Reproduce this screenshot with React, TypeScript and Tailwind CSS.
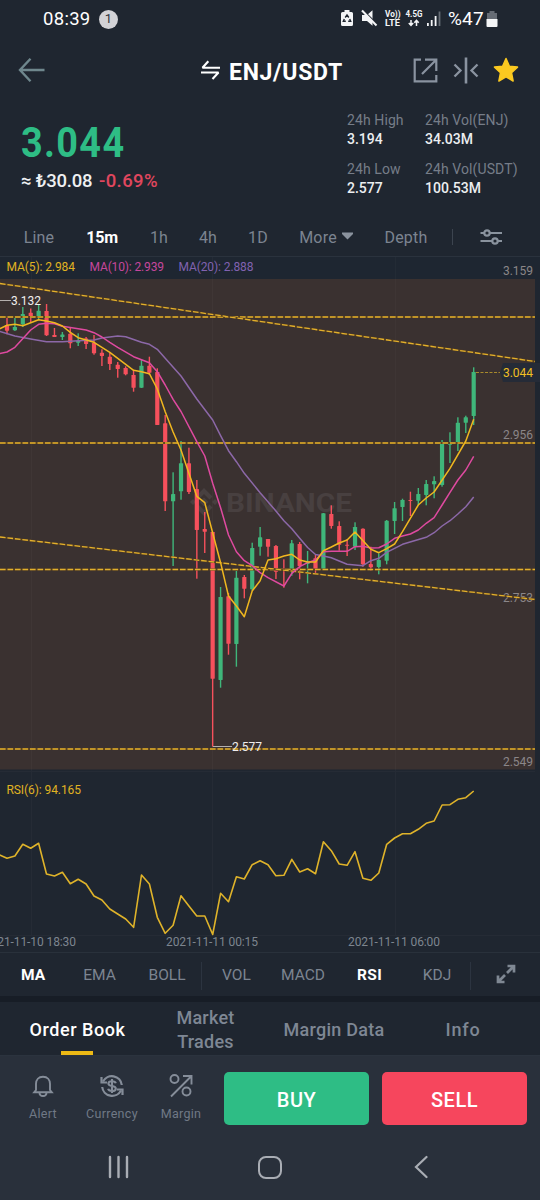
import type { ReactNode } from "react";

type Candle = [up: 0 | 1, high: number, top: number, bottom: number, low: number];
type Point = [number, number];

const GREEN = "#3fb67a";
const RED = "#f6505c";
const GOLD = "#e0b322";
const STEP = 7.91;

const candleX = (i: number) => 7 + i * STEP;

const candles: Candle[] = [
  [0, 317.7, 325.3, 330.7, 334.3],
  [1, 317.7, 327, 330.3, 331],
  [1, 307, 314, 324.3, 327],
  [0, 308.5, 312.7, 317.7, 322.7],
  [1, 304.3, 310.7, 316.3, 320],
  [0, 304, 311, 335.3, 336],
  [0, 328, 335, 337, 337],
  [1, 332, 334.5, 337, 340],
  [0, 328, 333.7, 343.3, 348.3],
  [1, 333.3, 340.7, 342.7, 346],
  [0, 337, 338.5, 344, 349],
  [0, 335, 342.7, 353.3, 354.7],
  [0, 349.3, 352.7, 356, 366],
  [0, 352.7, 356.7, 364, 370],
  [0, 362, 364.7, 369, 377.7],
  [0, 366.3, 368, 374.3, 375.3],
  [0, 370, 375, 387.7, 391.7],
  [1, 359.3, 365.7, 387.7, 388],
  [0, 356.7, 365.7, 372.7, 375],
  [0, 368.3, 372, 425, 425],
  [0, 415, 423.3, 501.3, 511],
  [1, 472.3, 494, 501.3, 566],
  [1, 441, 463.3, 491.3, 499.7],
  [0, 447.7, 463.3, 492, 494],
  [0, 480, 489, 530, 578.7],
  [0, 512, 529, 531.7, 553],
  [0, 531.7, 532, 678.7, 746.7],
  [1, 587, 597, 680, 687.7],
  [0, 593, 596.3, 643.7, 654.7],
  [1, 571, 577.7, 644, 666.7],
  [0, 575, 577, 588.7, 598.3],
  [1, 542.7, 548, 589.3, 590.7],
  [1, 527, 537.3, 546.7, 555.7],
  [0, 539, 539, 546.7, 556.7],
  [0, 545, 546, 571.7, 579],
  [0, 559.3, 569.3, 570.3, 587.7],
  [1, 540, 543.3, 570.7, 575.7],
  [0, 542, 544, 566, 579.3],
  [1, 551, 562.3, 564, 583.3],
  [0, 555, 558.3, 570, 573.3],
  [1, 513, 513.3, 569.3, 570],
  [0, 505.3, 514, 526, 528.7],
  [0, 521.3, 526, 544.7, 550.7],
  [0, 539, 544.7, 545.7, 556],
  [1, 522.3, 527, 546.7, 550],
  [0, 528.3, 528.7, 564.3, 566.7],
  [0, 546.7, 564, 567.3, 570.7],
  [1, 553.3, 560, 567, 574.3],
  [1, 520, 520.7, 560.7, 564.3],
  [1, 502, 508.3, 521, 534],
  [1, 498.7, 500, 507, 521],
  [0, 491.7, 500, 501, 516],
  [1, 488, 494, 500.7, 505],
  [1, 480, 484, 495, 505.3],
  [1, 476.3, 481, 484.3, 498.3],
  [1, 440, 443.7, 485, 486.7],
  [1, 432.3, 443.3, 444.7, 463],
  [1, 417.3, 422.7, 442.7, 451],
  [1, 415.7, 417.3, 422.7, 433],
  [1, 367.3, 372, 416, 425],
];

// Indicator lines as [candle index, y]
const ma5: Point[] = [
  [-1, 329], [0, 325.3], [1, 324.3], [2, 325.7], [4, 319.7], [5, 321], [6, 322.7], [7, 326], [8, 332.3],
  [9, 337.7], [11, 342.3], [13, 352.3], [15, 364.3], [16, 370.3], [17, 371.7], [18, 373.7], [19, 389],
  [20, 411.7], [21, 432], [22, 450], [23, 473.3], [24, 496.3], [25, 502.7], [26, 533], [27, 562.7],
  [28, 596], [29, 606], [30, 616.7], [31, 591], [32, 580.7], [33, 560], [34, 558.7], [35, 556],
  [36, 554.3], [37, 560], [38, 562], [39, 562], [40, 550.7], [41, 547], [42, 543], [43, 540],
  [44, 532], [46, 549.3], [47, 552.7], [48, 548.7], [49, 544], [50, 531.7], [52, 505], [53, 498],
  [54, 492], [56, 468.3], [58, 441], [59, 419.3],
];
const ma10: Point[] = [
  [-1, 353.7], [0, 352], [1, 347.3], [3, 330], [4, 324.3], [5, 323.3], [6, 323.7], [7, 326.3],
  [10, 330], [11, 332.7], [12, 337], [13, 342.3], [14, 347.3], [16, 356.7], [17, 359.7], [18, 362.7],
  [19, 371.7], [20, 385], [21, 399.3], [22, 411.5], [24, 441.7], [25, 456], [26, 483.3], [27, 507.7],
  [28, 535], [29, 551.7], [30, 560.7], [31, 565.7], [32, 572.7], [33, 577.7], [35, 586], [36, 573.3],
  [37, 566.7], [38, 562.7], [39, 560], [40, 551.7], [41, 551.3], [43, 551.3], [44, 546.7],
  [45, 546.3], [46, 548], [47, 547.7], [48, 544], [49, 538.3], [50, 536], [51, 534], [52, 530],
  [53, 523.3], [54, 517.7], [55, 505], [56, 492.3], [57, 480], [58, 470], [59, 456.3],
];
const ma20: Point[] = [
  [-1, 331.3], [1, 336], [3, 339], [5, 341.7], [7, 341.7], [9, 340.7], [11, 340], [12, 338],
  [14, 336], [15, 336.7], [17, 342.3], [18, 344.3], [19, 349.3], [20, 358.3], [22, 376], [24, 399],
  [26, 420], [27, 435.7], [28, 450.7], [29, 461.7], [30, 473.3], [32, 492.7], [34, 511],
  [35, 520.7], [36, 528.7], [37, 538.3], [38, 547.5], [39, 554.5], [40, 556], [41, 557.7],
  [43, 564.3], [45, 565.7], [46, 560.7], [47, 558.3], [48, 552.3], [50, 544.3], [53, 537.3],
  [54, 532.7], [55, 526], [56, 520.7], [57, 514], [58, 506.7], [59, 497],
];
const rsi = [
  854.7, 858.3, 856, 844.3, 848.3, 843.3, 874, 876, 872.3, 883.7, 879.3, 884, 896, 900, 909, 914,
  919, 927.3, 875, 884, 917.3, 933.3, 925.3, 895.7, 906, 916, 916, 934.5, 893.3, 901.7, 876.7, 879,
  864.7, 860.7, 864.7, 875.7, 875.3, 859.3, 872, 868.7, 873.7, 841.7, 850.7, 864, 865.3, 851.7,
  878.3, 880.3, 873, 844.3, 838, 833.7, 833.7, 829.3, 823.3, 821, 805, 804.7, 799.3, 797.7, 791,
];

const toPoints = (points: Point[]) =>
  points.map(([i, y]) => `${candleX(i).toFixed(1)},${y}`).join(" ");

const trendLines = [
  [0, 317, 535, 317],
  [0, 443, 535, 443],
  [0, 569.5, 535, 569.5],
  [0, 749, 535, 749],
  [0, 283.5, 535, 361.5],
  [0, 537, 535, 599.5],
];

function Chart() {
  return (
    <svg
      viewBox="0 256 540 696"
      width="540"
      height="696"
      className="block"
      fontFamily="Roboto, sans-serif"
      fontSize="12"
    >
      <rect x="0" y="256" width="540" height="1" fill="#2a323d" />
      <rect x="0" y="257" width="540" height="22" fill="#1e2631" />
      <rect x="0" y="279" width="535" height="490.5" fill="#3a3130" />
      <g fill="#ffffff" opacity="0.025">
        <rect x="31" y="257" width="1" height="678" />
        <rect x="212" y="257" width="1" height="678" />
        <rect x="395" y="257" width="1" height="678" />
        <rect x="0" y="771" width="535" height="1" />
        <rect x="0" y="935" width="540" height="1" />
      </g>

      {/* Watermark */}
      <g fill="#484040">
        <g transform="translate(204 502)">
          <path d="M0 -4.5 4.5 0 0 4.5 -4.5 0Z" />
          <path d="M-11 -3 -8 0 -11 3 -14 0Z" />
          <path d="M11 -3 14 0 11 3 8 0Z" />
          <path d="M0 -14 8.5 -5.5 5.5 -2.5 0 -8 -5.5 -2.5 -8.5 -5.5Z" />
          <path d="M0 14 8.5 5.5 5.5 2.5 0 8 -5.5 2.5 -8.5 5.5Z" />
        </g>
        <text x="226" y="511.5" fontSize="25" fontWeight="700" textLength="126" lengthAdjust="spacingAndGlyphs">
          BINANCE
        </text>
      </g>

      <g fill="#8b8688">
        <text x="503" y="275" textLength="30">3.159</text>
        <text x="503" y="439" textLength="30">2.956</text>
        <text x="503" y="602" textLength="30">2.753</text>
        <text x="503" y="766" textLength="30">2.549</text>
      </g>

      {candles.map(([up, high, top, bottom, low], i) => {
        const x = candleX(i);
        return (
          <g key={i} fill={up ? GREEN : RED}>
            <rect x={x - 0.7} y={high} width="1.4" height={low - high} />
            <rect x={x - 2.1} y={top} width="4.2" height={bottom - top} rx="0.4" />
          </g>
        );
      })}

      {trendLines.map(([x1, y1, x2, y2]) => (
        <g key={y1}>
          <line x1={x1} y1={y1} x2={x2} y2={y2} stroke="#59411f" strokeWidth="2" />
          <line
            x1={x1}
            y1={y1}
            x2={x2}
            y2={y2}
            stroke="#e2b02d"
            strokeWidth="1.3"
            strokeDasharray="5.6 1.9"
          />
        </g>
      ))}

      <g fill="none" strokeWidth="1.5" strokeLinejoin="round">
        <polyline points={toPoints(ma20)} stroke="#8c68a8" />
        <polyline points={toPoints(ma10)} stroke="#df4aa0" />
        <polyline points={toPoints(ma5)} stroke="#f0b71f" />
        <polyline
          points={rsi.map((y, i) => `${candleX(i - 1).toFixed(1)},${y}`).join(" ")}
          stroke="#dfb32a"
          strokeWidth="1.6"
        />
      </g>

      {/* High and low markers */}
      <path d="M0 300.5H11M213 746.5H232" stroke="#b5b0ae" strokeWidth="1" />
      <g fill="#f0eeee">
        <text x="11" y="305" textLength="30">3.132</text>
        <text x="232" y="751" textLength="30">2.577</text>
      </g>

      <path d="M476 372.5H500" stroke="#a88a2c" strokeWidth="1" strokeDasharray="3 1.5" />
      <path d="M500 372.5 503 363H540V382H503Z" fill="#252b37" />
      <text x="503" y="377" fill="#f0bf22" textLength="30">3.044</text>

      <text x="6.5" y="271" fill={GOLD} textLength="68.5">MA(5): 2.984</text>
      <text x="89.5" y="271" fill="#c6469c" textLength="74.5">MA(10): 2.939</text>
      <text x="178.5" y="271" fill="#8162b0" textLength="75">MA(20): 2.888</text>
      <text x="6.5" y="794" fill={GOLD} textLength="74.5">RSI(6): 94.165</text>

      <g fill="#7d858f">
        <text x="-16" y="945.5" textLength="92">2021-11-10 18:30</text>
        <text x="166" y="945.5" textLength="92">2021-11-11 00:15</text>
        <text x="348" y="945.5" textLength="92">2021-11-11 06:00</text>
      </g>
    </svg>
  );
}

function StatusBar() {
  return (
    <div className="flex h-[38px] items-center pl-[43px] pt-[1px] text-white">
      <span className="w-[48px] text-[18.5px] tracking-[0.3px]">08:39</span>
      <span className="-mt-[1px] ml-[8px] flex h-[19px] w-[19px] items-center justify-center rounded-full bg-[#d2d2d6] text-[13px] text-[#30343c]">
        1
      </span>
      <svg className="-mt-[1px] ml-[223px]" width="106" height="22" viewBox="341 8 106 22" fill="#f4f5f7">
        <path d="M344.5 10h5v2h2q1.5 0 1.5 1.5v11q0 1.5-1.5 1.5h-9q-1.5 0-1.5-1.5v-11q0-1.5 1.5-1.5h2z" />
        <path
          d="M345.2 17.500 347 15l1.800 2.500M349.700 19l1 2.300h-2.500M345.800 21.300h-2.500l1-2.300"
          fill="none"
          stroke="#1f2630"
          strokeWidth="1.4"
        />
        <path d="M362 15h5l5.500-4.800v15.600L367 21h-5z" />
        <path d="M361 8.500 377 24.500" stroke="#1f2630" strokeWidth="2" />
        <path d="M362 10.500 376.500 25.500" stroke="#f4f5f7" strokeWidth="2" />
        <g fontFamily="Roboto, sans-serif" fontWeight="700">
          <text x="385" y="17.300" fontSize="9" textLength="15.500" lengthAdjust="spacingAndGlyphs">Vo))</text>
          <text x="385" y="26.300" fontSize="9.500" textLength="15" lengthAdjust="spacingAndGlyphs">LTE</text>
          <text x="405.500" y="17.300" fontSize="9" textLength="17" lengthAdjust="spacingAndGlyphs">4.5G</text>
        </g>
        <path
          d="M411 20v5M408.800 23l2.200 2.400 2.200-2.400M416.500 26v-5M414.300 22.800l2.200-2.400 2.200 2.400"
          fill="none"
          stroke="#f4f5f7"
          strokeWidth="1.500"
        />
        <path d="M427 23h1.800v3H427zM430.800 20h1.800v6h-1.800zM434.700 16h1.800v10h-1.800z" />
        <path d="M438.600 11.500h1.800V26h-1.800z" fill="#666c75" />
      </svg>
      <span className="ml-[1px] w-[38px] text-[19px] tracking-[0.2px]">%47</span>
      <svg className="-mt-[2px]" width="12" height="18" viewBox="0 0 12 18">
        <path d="M3.500 1h5v2H11v7H1V3h2.500z" fill="#666c75" />
        <path d="M0.500 9h11v7q0 1-1 1h-9q-1 0-1-1z" fill="#f4f5f7" />
      </svg>
    </div>
  );
}

function Header() {
  return (
    <header className="flex h-[64px] items-center pl-[18px]">
      <svg width="27" height="26" viewBox="0 0 27 26" fill="none" stroke="#6f878d" strokeWidth="2.4">
        <path d="M26.500 13H2M12.500 1.800 2 13l10.500 11.200" />
      </svg>
      <svg className="ml-[155px]" width="21" height="21" viewBox="0 0 21 21" fill="none" stroke="#fff" strokeWidth="2.1">
        <path d="M20 7.700H2.500L8.300 1.200M1 12.500h17.500L12.500 19" strokeLinejoin="bevel" />
      </svg>
      <h1 className="ml-[8px] mt-[5px] w-[115px] whitespace-nowrap text-[23px] font-bold leading-6 tracking-[0.7px] text-white">
        ENJ/USDT
      </h1>
      <svg className="ml-[69px]" width="25" height="25" viewBox="0 0 25 25" fill="none" stroke="#8a93a0" strokeWidth="2.2">
        <path d="M8 1.700H1.700v21.600h21.600V17M12 1.700h11.300V13M23 2 9 16" />
      </svg>
      <svg className="ml-[15px]" width="26" height="27" viewBox="0 0 26 27" fill="none" stroke="#8a93a0" strokeWidth="2.3">
        <path d="M13 0.500v26" strokeWidth="2.600" />
        <path d="M1.500 7.500 7.500 13.500 1.500 19.500M24.500 7.500 18.500 13.500 24.500 19.500" />
      </svg>
      <svg className="ml-[14px]" width="26" height="26" viewBox="0 0 26 26">
        <path
          d="M13 1.500l3.400 7.700 8.100.9-6 5.600 1.600 8.300-7.100-4.200L5.900 24l1.600-8.300-6-5.600 8.100-.9z"
          fill="#fbc920"
          stroke="#fbc920"
          strokeWidth="1.500"
          strokeLinejoin="round"
        />
      </svg>
    </header>
  );
}

function Stat({ label, value }: { label: string; value: string }) {
  return (
    <div className="whitespace-nowrap">
      <div className="h-[20px] text-[14px] leading-[20px] tracking-[0.1px] text-[#767d88]">{label}</div>
      <div className="h-[18px] text-[14px] font-medium leading-[18px] text-[#eceef0]">{value}</div>
    </div>
  );
}

function PriceSummary() {
  return (
    <section className="flex h-[116px]">
      <div className="w-[347px] pl-[21px] pt-[16px]">
        <div className="h-[48px] origin-left scale-x-[0.88] text-[43px] font-bold leading-[48px] tracking-[1.5px] text-[#2ebd85]">
          3.044
        </div>
        <div className="flex h-[30px] whitespace-nowrap text-[18.5px] font-medium leading-[30px]">
          <span className="w-[78px] tracking-[-0.2px] text-[#eef0f2]">≈ ₺30.08</span>
          <span className="tracking-[0.4px] text-[#e0465e]">-0.69%</span>
        </div>
      </div>
      <div className="grid grid-cols-[78px_auto] content-start gap-y-[11px] pt-[8px]">
        <Stat label="24h High" value="3.194" />
        <Stat label="24h Vol(ENJ)" value="34.03M" />
        <Stat label="24h Low" value="2.577" />
        <Stat label="24h Vol(USDT)" value="100.53M" />
      </div>
    </section>
  );
}

function Intervals() {
  return (
    <nav className="flex h-[38px] items-center pt-[2px] text-center text-[16px] tracking-[0.2px] text-[#7c8490]">
      <span className="w-[78px]">Line</span>
      <span className="w-[48px] font-bold tracking-[-0.2px] text-white">15m</span>
      <span className="w-[66px]">1h</span>
      <span className="w-[32px]">4h</span>
      <span className="w-[68px]">1D</span>
      <span className="flex w-[68px] items-center justify-center gap-[5px]">
        More
        <svg width="11" height="8" viewBox="0 0 11 8" className="-mt-1">
          <path d="M0 0.500h11v1.500L5.500 7.500 0 2z" fill="#8a929d" />
        </svg>
      </span>
      <span className="w-[92px]">Depth</span>
      <span className="-mt-[2px] h-[16px] w-px bg-[#3c444f]" />
      <span className="-mt-[3px] flex w-[75px] justify-center">
        <svg width="22" height="18" viewBox="0 0 22 18" fill="#1f2630" stroke="#8a939e" strokeWidth="2.2">
          <path d="M0.500 5H22M0.500 13H22" />
          <circle cx="7" cy="5" r="2.700" />
          <circle cx="15" cy="13" r="2.700" />
        </svg>
      </span>
    </nav>
  );
}

function Indicators() {
  return (
    <nav className="flex h-[44px] items-center border-t border-[#29313b] pt-[2px] text-center text-[15.5px] text-[#7c8490]">
      <span className="w-[66px] font-bold text-white">MA</span>
      <span className="w-[67px]">EMA</span>
      <span className="w-[68px]">BOLL</span>
      <span className="h-[28px] w-px bg-[#2c3440]" />
      <span className="w-[69px]">VOL</span>
      <span className="w-[64px]">MACD</span>
      <span className="w-[69px] font-bold tracking-[0.4px] text-white">RSI</span>
      <span className="w-[66px]">KDJ</span>
      <span className="h-[28px] w-px bg-[#2c3440]" />
      <span className="-mt-[3px] flex w-[69px] justify-center">
        <svg width="20" height="20" viewBox="0 0 20 20" fill="none" stroke="#7f8893" strokeWidth="2.7">
          <path d="M11.500 2H18v6.500M17.500 2.500 11 9M8.500 18H2v-6.500M2.500 17.500 9 11" />
        </svg>
      </span>
    </nav>
  );
}

function SectionTabs() {
  return (
    <nav className="relative flex h-[54px] items-center border-b border-[#2b333e] pt-[3px] text-center text-[18px] leading-[24px] tracking-[0.25px] text-[#7e8794]">
      <span className="w-[155px] font-medium tracking-[0.55px] text-white">Order Book</span>
      <span className="w-[101px] px-[16px] font-medium">Market Trades</span>
      <span className="w-[156px] font-medium">Margin Data</span>
      <span className="w-[102px] font-medium tracking-[0.8px]">Info</span>
      <span className="absolute bottom-0 left-[61px] h-[4px] w-[32px] bg-[#edb915]" />
    </nav>
  );
}

function Action({ label, className, children }: { label: string; className: string; children: ReactNode }) {
  return (
    <div className={`flex flex-col items-center pt-[1px] ${className}`}>
      <svg width="26" height="26" viewBox="0 0 26 26" fill="none" stroke="#858d99" strokeWidth="1.9">
        {children}
      </svg>
      <span className="mt-[6px] text-[12.5px] leading-[18px] tracking-[0.3px] text-[#707986]">{label}</span>
    </div>
  );
}

function BottomBar() {
  return (
    <div className="flex h-[78px] pt-[15.5px]">
      <Action label="Alert" className="w-[86px]">
        <path d="M13 3.800c-4.500 0-7 3-7 7V17l-1.800 2.200h17.600L20 17v-6.200c0-4-2.500-7-7-7z" />
        <path d="M9.500 19.500q0 3.500 3.500 3.500t3.500-3.500" />
      </Action>
      <Action label="Currency" className="w-[52px]">
        <path d="M4 8.500A10 10 0 0 1 22.800 12M22 17.500A10 10 0 0 1 3.200 14" strokeWidth="2.200" />
        <path d="M2.500 4v5.500H8M23.500 22v-5.500H18" strokeWidth="2.200" />
        <path d="M16.800 10.200q-.6-2-3.800-2-3.600 0-3.600 2.300 0 2 3.600 2.500 3.800.5 3.800 2.700 0 2.300-3.800 2.300-3.300 0-3.900-2.200M13 6v14" strokeWidth="2.100" />
      </Action>
      <Action label="Margin" className="w-[86px]">
        <circle cx="6.500" cy="6" r="4" />
        <circle cx="18.500" cy="18.500" r="4" />
        <path d="M3 23.500 22.500 4M15 3h8.500v8.500" />
      </Action>
      <button className="h-[53px] w-[145px] rounded-[5px] bg-[#2ebd85] pt-[3px] text-[20px] font-medium tracking-[0.5px] text-white">
        BUY
      </button>
      <button className="ml-[13px] h-[53px] w-[145px] rounded-[5px] bg-[#f6465d] pt-[3px] text-[20px] font-medium tracking-[0.5px] text-white">
        SELL
      </button>
    </div>
  );
}

function AndroidNav() {
  return (
    <div className="flex h-[66px] items-center pl-[107px]">
      <svg width="23" height="24" viewBox="0 0 23 24" stroke="#a9adb4" strokeWidth="2.4" strokeLinecap="round">
        <path d="M3 2v20M11.500 2v20M20 2v20" />
      </svg>
      <span className="ml-[128px] h-[23px] w-[24px] rounded-[8px] border-2 border-[#a9adb4]" />
      <svg className="ml-[132px]" width="14" height="24" viewBox="0 0 14 24" fill="none" stroke="#a9adb4" strokeWidth="2.2" strokeLinecap="round">
        <path d="M12.500 2 2 12l10.500 10" />
      </svg>
    </div>
  );
}

export default function App() {
  return (
    <div className="h-[1200px] w-[540px] overflow-hidden bg-[#1f2630] font-['Roboto',sans-serif]">
      <StatusBar />
      <Header />
      <PriceSummary />
      <Intervals />
      <Chart />
      <Indicators />
      <div className="h-[6px] bg-[#171d26]" />
      <SectionTabs />
      <div className="h-[144px] bg-[#29303b]">
        <BottomBar />
        <AndroidNav />
      </div>
    </div>
  );
}
